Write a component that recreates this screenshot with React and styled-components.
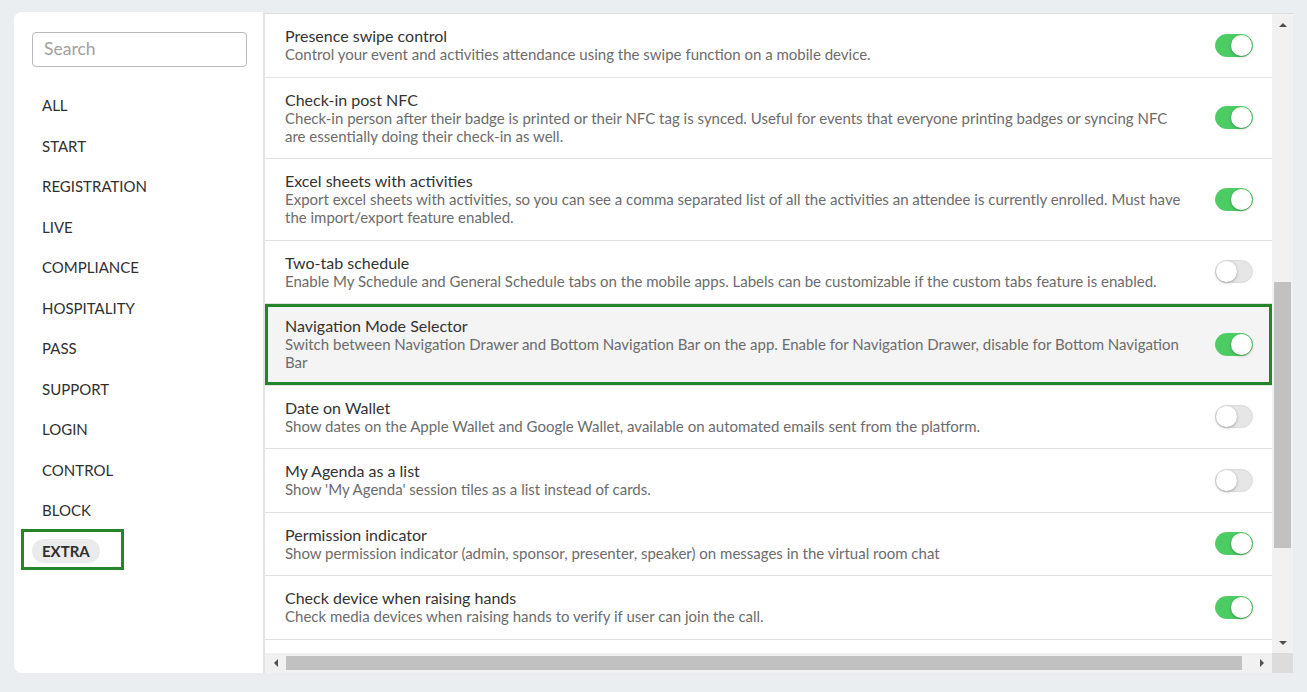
import React from "react";
import styled, { createGlobalStyle } from "styled-components";

const GlobalStyle = createGlobalStyle`
  body {
    margin: 0;
    background: #ebeef0;
    font-family: Lato, "Open Sans", sans-serif;
  }
`;

const Page = styled.div`
  padding: 12px 14px 0 14px;
  height: 692px;
  box-sizing: border-box;
`;

const Card = styled.div`
  display: flex;
  width: 1279px;
  height: 661px;
`;

const Sidebar = styled.aside`
  width: 249px;
  flex-shrink: 0;
  background: #fff;
  border-radius: 8px 0 0 8px;
  padding: 20px 16px 0 18px;
  box-sizing: border-box;
`;

const Search = styled.input`
  display: block;
  width: 100%;
  height: 35px;
  box-sizing: border-box;
  border: 1px solid #b9b9b9;
  border-radius: 4px;
  padding: 0 11px 2px;
  font-family: Lato, sans-serif;
  font-size: 17.5px;
  color: #333;
  outline: none;

  &::placeholder {
    color: #a0a0a0;
  }
`;

const NavList = styled.nav`
  display: flex;
  flex-direction: column;
  align-items: flex-start;
  gap: 16.5px;
  margin-top: 26px;
`;

const NavItem = styled.div`
  height: 24px;
  line-height: 24px;
  padding: 0 10px;
  border-radius: 12px;
  font-size: 15px;
  color: #2f2f2f;
  font-weight: ${(p) => (p.$active ? 700 : 400)};
  background: ${(p) => (p.$active ? "#ebebeb" : "transparent")};
`;

/* green annotation frame around the active item */
const Marked = styled.div`
  margin: -10px 0 -7px -11px;
  padding: 7px 21px 4px 8px;
  border: 3px solid #23862a;
`;

const Panel = styled.section`
  flex: 1;
  margin-top: 1px;
  border-top: 1px solid #dedede;
  border-left: 2px solid #e3e3e3;
  display: grid;
  grid-template-columns: 1fr 21px;
  grid-template-rows: 1fr 20px;
  min-width: 0;
`;

const Content = styled.div`
  background: #fff;
  overflow: hidden;
`;

const Row = styled.div`
  display: flex;
  align-items: center;
  padding: 13px 19px 13.5px 20px;
  border-bottom: 1px solid #e2e2e2;
  background: ${(p) => (p.$marked ? "#f4f4f4" : "#fff")};
  box-shadow: ${(p) => (p.$marked ? "inset 0 0 0 3px #23862a" : "none")};
`;

const Text = styled.div`
  flex: 1;
  margin-right: 29px;
`;

const Title = styled.div`
  font-size: 16px;
  line-height: 18px;
  color: #333;
`;

const Desc = styled.div`
  font-size: 15px;
  line-height: 18px;
  color: #6c6c6c;
`;

const Track = styled.span`
  position: relative;
  flex-shrink: 0;
  width: 38px;
  height: 23px;
  border-radius: 12px;
  box-sizing: border-box;
  background: ${(p) => (p.$on ? "#4ccd63" : "#e6e6e6")};
  border: 1px solid ${(p) => (p.$on ? "#4ccd63" : "#dcdcdc")};
`;

const Knob = styled.span`
  position: absolute;
  top: 0;
  left: ${(p) => (p.$on ? "15px" : "0")};
  width: 21px;
  height: 21px;
  border-radius: 50%;
  background: #fff;
  box-shadow: 0 1px 3px rgba(0, 0, 0, 0.3);
`;

const VBar = styled.div`
  background: #f1f1f1;
  display: flex;
  flex-direction: column;
`;

const HBar = styled.div`
  background: #f1f1f1;
  display: flex;
`;

const Arrow = styled.div`
  flex-shrink: 0;
  width: 21px;
  height: ${(p) => (p.$vertical ? "21px" : "20px")};
  display: flex;
  align-items: center;
  justify-content: center;
`;

const VThumb = styled.div`
  margin: 247px 2px 0;
  height: 266px;
  background: #c1c1c1;
`;

const HThumb = styled.div`
  margin: 3px 0;
  width: 956px;
  background: #c1c1c1;
`;

const Spacer = styled.div`
  flex: 1;
`;

const Corner = styled.div`
  background: #dcdcdc;
`;

const arrows = {
  up: "0,4 4,0 8,4",
  down: "0,0 8,0 4,4",
  left: "4,0 4,8 0,4",
  right: "0,0 0,8 4,4",
};

const ScrollArrow = ({ dir }) => {
  const vertical = dir === "up" || dir === "down";
  return (
    <Arrow $vertical={vertical}>
      <svg width={vertical ? 8 : 4} height={vertical ? 4 : 8}>
        <polygon points={arrows[dir]} fill="#505050" />
      </svg>
    </Arrow>
  );
};

const Toggle = ({ on }) => (
  <Track $on={on} role="switch" aria-checked={on}>
    <Knob $on={on} />
  </Track>
);

const nav = [
  "ALL",
  "START",
  "REGISTRATION",
  "LIVE",
  "COMPLIANCE",
  "HOSPITALITY",
  "PASS",
  "SUPPORT",
  "LOGIN",
  "CONTROL",
  "BLOCK",
];

const features = [
  {
    title: "Presence swipe control",
    desc: "Control your event and activities attendance using the swipe function on a mobile device.",
    on: true,
  },
  {
    title: "Check-in post NFC",
    desc: "Check-in person after their badge is printed or their NFC tag is synced. Useful for events that everyone printing badges or syncing NFC are essentially doing their check-in as well.",
    on: true,
  },
  {
    title: "Excel sheets with activities",
    desc: "Export excel sheets with activities, so you can see a comma separated list of all the activities an attendee is currently enrolled. Must have the import/export feature enabled.",
    on: true,
  },
  {
    title: "Two-tab schedule",
    desc: "Enable My Schedule and General Schedule tabs on the mobile apps. Labels can be customizable if the custom tabs feature is enabled.",
    on: false,
  },
  {
    title: "Navigation Mode Selector",
    desc: "Switch between Navigation Drawer and Bottom Navigation Bar on the app. Enable for Navigation Drawer, disable for Bottom Navigation Bar",
    on: true,
    marked: true,
  },
  {
    title: "Date on Wallet",
    desc: "Show dates on the Apple Wallet and Google Wallet, available on automated emails sent from the platform.",
    on: false,
  },
  {
    title: "My Agenda as a list",
    desc: "Show 'My Agenda' session tiles as a list instead of cards.",
    on: false,
  },
  {
    title: "Permission indicator",
    desc: "Show permission indicator (admin, sponsor, presenter, speaker) on messages in the virtual room chat",
    on: true,
  },
  {
    title: "Check device when raising hands",
    desc: "Check media devices when raising hands to verify if user can join the call.",
    on: true,
  },
];

export default function App() {
  return (
    <Page>
      <GlobalStyle />
      <Card>
        <Sidebar>
          <Search placeholder="Search" />
          <NavList>
            {nav.map((n) => (
              <NavItem key={n}>{n}</NavItem>
            ))}
            <Marked>
              <NavItem $active>EXTRA</NavItem>
            </Marked>
          </NavList>
        </Sidebar>
        <Panel>
          <Content>
            {features.map((f) => (
              <Row key={f.title} $marked={f.marked}>
                <Text>
                  <Title>{f.title}</Title>
                  <Desc>{f.desc}</Desc>
                </Text>
                <Toggle on={f.on} />
              </Row>
            ))}
          </Content>
          <VBar>
            <ScrollArrow dir="up" />
            <VThumb />
            <Spacer />
            <ScrollArrow dir="down" />
          </VBar>
          <HBar>
            <ScrollArrow dir="left" />
            <HThumb />
            <Spacer />
            <ScrollArrow dir="right" />
          </HBar>
          <Corner />
        </Panel>
      </Card>
    </Page>
  );
}
